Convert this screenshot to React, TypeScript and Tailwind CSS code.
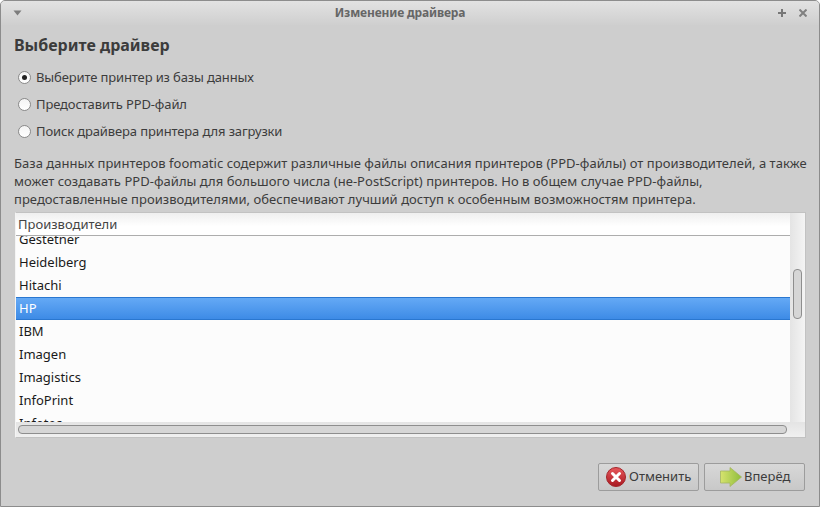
import React from 'react';

const rows = ['Gestetner', 'Heidelberg', 'Hitachi', 'HP', 'IBM', 'Imagen', 'Imagistics', 'InfoPrint', 'Infotec'];

const drivers = [
  { label: 'Выберите принтер из базы данных', checked: true },
  { label: 'Предоставить PPD-файл', checked: false },
  { label: 'Поиск драйвера принтера для загрузки', checked: false },
];

function Radio({ checked }: { checked: boolean }) {
  return (
    <span className="flex h-[13px] w-[13px] shrink-0 items-center justify-center rounded-full border border-[#8a8a8a] bg-gradient-to-b from-[#f4f4f4] to-white">
      {checked && <span className="h-[5px] w-[5px] rounded-full bg-[#222]" />}
    </span>
  );
}

function CancelIcon() {
  return (
    <svg width="20" height="20" viewBox="0 0 20 20" className="shrink-0">
      <defs>
        <linearGradient id="cancelFill" x1="0" y1="0" x2="0" y2="1">
          <stop offset="0" stopColor="#e8585c" />
          <stop offset="1" stopColor="#a81820" />
        </linearGradient>
      </defs>
      <circle cx="10" cy="10" r="9.5" fill="url(#cancelFill)" stroke="#a3262b" />
      <path d="M6.5 6.500l7 7M13.500 6.500l-7 7" stroke="#fff" strokeWidth="3" strokeLinecap="round" />
    </svg>
  );
}

function ForwardIcon() {
  return (
    <svg width="22" height="20" viewBox="0 0 22 20" className="shrink-0">
      <defs>
        <linearGradient id="forwardFill" x1="0" y1="0" x2="1" y2="0">
          <stop offset="0" stopColor="#d6e36e" />
          <stop offset="1" stopColor="#8fbd3c" />
        </linearGradient>
      </defs>
      <path d="M0.500 4h9.500V0.500L21.500 10 10 19.500V16H0.500z" fill="url(#forwardFill)" stroke="#a3b562" strokeWidth="0.8" />
    </svg>
  );
}

export default function App() {
  return (
    <div className="flex h-[507px] w-[820px] flex-col overflow-hidden rounded-t-[5px] border border-[#8c8c8c] bg-[#cecece] font-['Noto_Sans',sans-serif] text-[13px] text-[#3c3c3c]">
      {/* Title bar */}
      <div className="flex h-[24px] shrink-0 items-center bg-gradient-to-b from-[#e2e2e2] to-[#cfcfcf] pl-[12px] pr-[12px]">
        <svg width="9" height="6" viewBox="0 0 9 6" className="mt-[-1px] shrink-0">
          <path d="M0.500 0.500h8L4.500 5.500z" fill="#7d7d7d" />
        </svg>
        <div className="flex-1 text-center text-[12px] font-bold leading-none tracking-[-0.15px] text-[#666]">Изменение драйвера</div>
        <div className="flex items-center gap-[13px]">
          <svg width="8" height="8" viewBox="0 0 8 8">
            <path d="M4 0v8M0 4h8" stroke="#777" strokeWidth="2" />
          </svg>
          <svg width="8" height="8" viewBox="0 0 8 8">
            <path d="M0.500 0.500l7 7M7.500 0.500l-7 7" stroke="#808080" strokeWidth="2" />
          </svg>
        </div>
      </div>

      <div className="flex min-h-0 flex-1 flex-col px-[13px]">
        <h1 className="mt-[9px] text-[16px] font-bold leading-[22px] text-[#3c3c3c]">Выберите драйвер</h1>

        <div className="mt-[12px] flex flex-col gap-[9px] pl-[4px]">
          {drivers.map((d) => (
            <label key={d.label} className="flex h-[18px] items-center gap-[5px] leading-[18px] tracking-[-0.13px]">
              <Radio checked={d.checked} />
              {d.label}
            </label>
          ))}
        </div>

        <p className="mt-[14px] whitespace-nowrap leading-[18px] tracking-[0.03px] text-[#3c3c3c]">
          База данных принтеров foomatic содержит различные файлы описания принтеров (PPD-файлы) от производителей, а также
          <br />
          может создавать PPD-файлы для большого числа (не-PostScript) принтеров. Но в общем случае PPD-файлы,
          <br />
          предоставленные производителями, обеспечивают лучший доступ к особенным возможностям принтера.
        </p>

        {/* Manufacturers list */}
        <div className="ml-[1px] mt-[4px] flex h-[226px] w-[791px] border border-[#c2c2c2] border-l-[#f4f4f4] bg-white">
          <div className="flex min-w-0 flex-1 flex-col">
            <div className="flex min-h-0 flex-1">
              <div className="flex min-w-0 flex-1 flex-col">
                <div className="h-[23px] shrink-0 border-b border-[#adadad] bg-gradient-to-b from-[#efefef] to-white to-60% pl-[2px] leading-[23px] text-[#444]">
                  Производители
                </div>
                <div className="min-h-0 flex-1 overflow-hidden bg-[#fcfcfc] text-[#1a1a1a]">
                  <div className="mt-[-8px]">
                    {rows.map((name) =>
                      name === 'HP' ? (
                        <div
                          key={name}
                          className="h-[23px] border-y border-[#2a77d0] bg-gradient-to-b from-[#64a9f5] to-[#3d8be6] pl-[3px] leading-[21px] text-white"
                        >
                          {name}
                        </div>
                      ) : (
                        <div key={name} className="h-[23px] pl-[3px] leading-[23px]">
                          {name}
                        </div>
                      ),
                    )}
                  </div>
                </div>
              </div>
              {/* Vertical scrollbar */}
              <div className="w-[15px] shrink-0 bg-gradient-to-r from-[#e4e4e4] to-[#f4f4f4] pl-[3px] pt-[56px]">
                <div className="h-[50px] w-[9px] rounded-[4px] border border-[#8e8e8e] bg-[#d6d6d6]" />
              </div>
            </div>
            {/* Horizontal scrollbar */}
            <div className="flex h-[15px] shrink-0 items-center bg-gradient-to-b from-[#e4e4e4] to-[#f0f0f0] pl-[2px] pr-[18px]">
              <div className="h-[9px] flex-1 rounded-[4px] border border-[#8e8e8e] bg-[#d6d6d6]" />
            </div>
          </div>
        </div>

        {/* Action buttons */}
        <div className="mt-[25px] flex justify-end gap-[5px] pr-[1px]">
          <button className="flex h-[28px] w-[101px] items-center gap-[3px] rounded-[2px] border border-[#9c9c9c] bg-gradient-to-b from-[#d8d8d8] to-[#c8c8c8] pl-[7px] text-[#3c3c3c]">
            <CancelIcon />
            Отменить
          </button>
          <button className="flex h-[28px] w-[101px] items-center gap-[2px] rounded-[2px] border border-[#9c9c9c] bg-gradient-to-b from-[#d8d8d8] to-[#c8c8c8] pl-[15px] text-[#3c3c3c]">
            <ForwardIcon />
            Вперёд
          </button>
        </div>
      </div>
    </div>
  );
}
